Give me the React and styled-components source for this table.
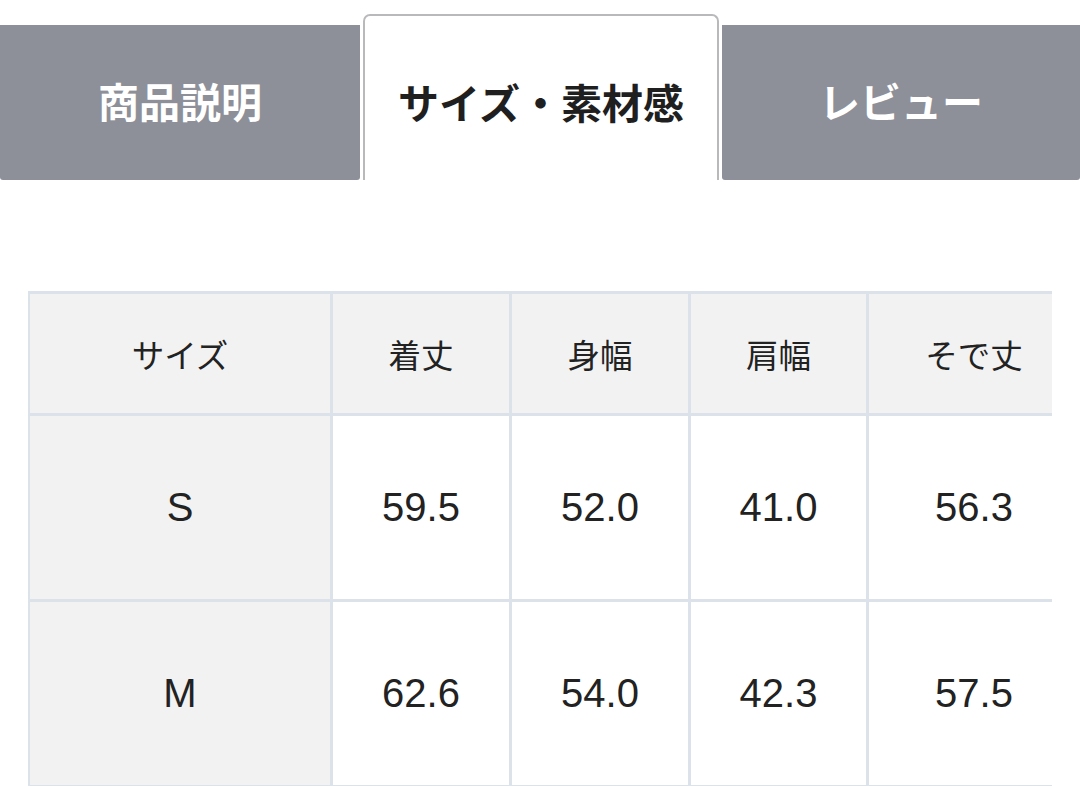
import styled, { createGlobalStyle } from "styled-components";

const GlobalStyle = createGlobalStyle`
  body {
    margin: 0;
    background: #ffffff;
    font-family: "Noto Sans CJK JP", "Liberation Sans", sans-serif;
    color: #222222;
  }
`;

const Page = styled.div`
  width: 1080px;
  height: 786px;
  overflow: hidden;
  background: #ffffff;
`;

const TabBar = styled.div`
  display: flex;
  align-items: flex-end;
  gap: 3px;
  height: 180px;
`;

const Tab = styled.div`
  display: flex;
  align-items: center;
  justify-content: center;
  box-sizing: border-box;
  width: ${(p) => p.$width}px;
  height: 155px;
  padding-bottom: 6px;
  background: #8e9099;
  color: #ffffff;
  font-size: 41px;
  font-weight: 700;
  border-radius: 0 0 3px 3px;
`;

const ActiveTab = styled.div`
  display: flex;
  align-items: center;
  justify-content: center;
  box-sizing: border-box;
  width: ${(p) => p.$width}px;
  height: 166px;
  padding-top: 6px;
  background: #ffffff;
  color: #1f1f1f;
  font-size: 41px;
  font-weight: 700;
  border: 2px solid #b9b9bc;
  border-bottom: none;
  border-radius: 7px 7px 0 0;
`;

const TableFrame = styled.div`
  margin: 111px 0 0 28px;
  width: 1024px;
  overflow: hidden;
`;

const SizeTable = styled.table`
  border-collapse: collapse;
  table-layout: fixed;
  width: 1052px;
  margin-left: -1px;
`;

const Cell = styled.td`
  border: 3px solid #dce2ea;
  text-align: center;
  vertical-align: middle;
  padding: 0;
  background: ${(p) => (p.$shade ? "#f2f2f2" : "#ffffff")};
  font-family: ${(p) =>
    p.$num ? `"Liberation Sans", Arial, sans-serif` : `"Noto Sans CJK JP", sans-serif`};
  font-size: ${(p) => (p.$num ? "40px" : "32.5px")};
  color: #222222;
`;

const HeadRow = styled.tr`
  height: 122px;
`;

const BodyRow = styled.tr`
  height: 186px;
`;

const columns = ["サイズ", "着丈", "身幅", "肩幅", "そで丈"];
const widths = [303, 179, 179, 178, 213];

const rows = [
  ["S", "59.5", "52.0", "41.0", "56.3"],
  ["M", "62.6", "54.0", "42.3", "57.5"],
];

export default function App() {
  return (
    <Page>
      <GlobalStyle />
      <TabBar>
        <Tab $width={360}>商品説明</Tab>
        <ActiveTab $width={356}>サイズ・素材感</ActiveTab>
        <Tab $width={358}>レビュー</Tab>
      </TabBar>
      <TableFrame>
        <SizeTable>
          <colgroup>
            {widths.map((w, i) => (
              <col key={i} style={{ width: w }} />
            ))}
          </colgroup>
          <tbody>
            <HeadRow>
              {columns.map((c) => (
                <Cell key={c} $shade>
                  {c}
                </Cell>
              ))}
            </HeadRow>
            {rows.map((r) => (
              <BodyRow key={r[0]}>
                {r.map((v, i) => (
                  <Cell key={i} $shade={i === 0} $num>
                    {v}
                  </Cell>
                ))}
              </BodyRow>
            ))}
          </tbody>
        </SizeTable>
      </TableFrame>
    </Page>
  );
}
